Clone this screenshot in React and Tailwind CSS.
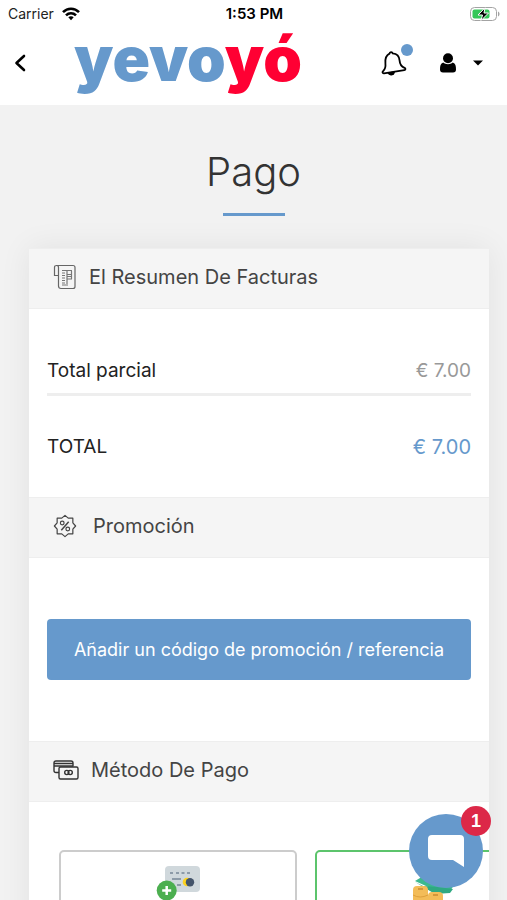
import { useState } from "react";

const methods = [
  { id: "card", label: "Tarjeta" },
  { id: "cash", label: "Efectivo" },
];

function WifiIcon() {
  return (
    <svg viewBox="0 0 18 14" className="w-[18px] h-[14px]" fill="none" stroke="#000" strokeWidth="2.6">
      <path d="M1 5.2C5.5 .6 12.500 .6 17 5.200" />
      <path d="M4 8.400c2.800-2.800 7.200-2.800 10 0" />
      <path d="M6.300 10.200c1.500-1.400 3.900-1.400 5.400 0L9 13.200z" fill="#000" stroke="none" />
    </svg>
  );
}

function BatteryIcon() {
  return (
    <svg viewBox="0 0 32 16" className="w-8 h-4">
      <rect x="1.500" y="1.500" width="26" height="13" rx="4" fill="#fff" stroke="#a3a3a3" />
      <rect x="3.500" y="3.500" width="17" height="9" rx="2" fill="#35c759" />
      <path d="M29 5.500c2 .8 2 4.200 0 5z" fill="#a3a3a3" />
      <path d="M16 1.800 9 9h4.500L12 14.500 19.500 7H15z" fill="#000" stroke="#fff" strokeWidth="1" />
    </svg>
  );
}

function BellIcon() {
  return (
    <svg viewBox="0 0 26 26" className="w-[26px] h-[26px]" fill="none" stroke="#000" strokeWidth="1.8" strokeLinejoin="round">
      <path d="M8.500 3.600c.2-1.900 2.700-2 3.200-.2 4.200.4 6.600 3.200 6.900 7.200.2 3.600 1.400 5.700 5 7.200 1.300.7 1 2.200-.3 2.400L3 23.400c-1.600.2-2-1.500-.8-2.400 2.300-2 2.600-4 2.200-7.800C4 8.600 5.300 5.200 8.500 3.600z" />
      <path d="M7.500 23.200c1 2 5 1.700 5.500-.7z" fill="#000" />
    </svg>
  );
}

function UserIcon() {
  return (
    <svg viewBox="0 0 18 20" className="w-[18px] h-5">
      <circle cx="9" cy="5.200" r="5" fill="#000" />
      <path d="M4.200 9.500C1.500 10.500 1 13 1 16.500 1 18.500 2 19.500 4 19.500h10c2 0 3-1 3-3 0-3.500-.5-6-3.200-7-2.600 2.300-7 2.300-9.600 0z" fill="#000" />
    </svg>
  );
}

function InvoiceIcon() {
  return (
    <svg viewBox="0 0 24 26" className="w-6 h-[26px]" fill="none" stroke="#666" strokeWidth="1.200">
      <path d="M3 1.500h17q2 0 2 2v19q0 2-2 2H8q-2.500 0-2.500-2.500V3.500q0-2-2-2t-2 2v8h4" />
      <path d="M9 6.500h10M9 9h3M9 11.500h3M9 14h3M9 16.500h3M9 19h3M9 21h6" stroke="#777" />
      <path d="M14 7v13M18.500 7v8M14 10.500h5M14 12.500h5M14 15h5" stroke="#777" />
    </svg>
  );
}

function PromoIcon() {
  return (
    <svg viewBox="0 0 26 26" className="w-6 h-6" fill="none" stroke="#444" strokeWidth="1.300" strokeLinejoin="round">
      <path d="M13 1.500 16.500 4.500H21.500v5l3 3.500-3 3.500v5h-5L13 24.500 9.500 21.500h-5v-5L1.500 13l3-3.500v-5h5z" />
      <circle cx="10" cy="9.800" r="2" />
      <circle cx="16" cy="16.200" r="2" />
      <path d="m17 8.500-8 9" strokeWidth="1.600" />
    </svg>
  );
}

function CardsIcon() {
  return (
    <svg viewBox="0 0 26 20" className="w-[26px] h-5" fill="none" stroke="#333" strokeWidth="1.400">
      <path d="M6 12.500H3q-2 0-2-2V3q0-2 2-2h15q2 0 2 2v3.500" />
      <path d="M1 3.500h19M1 6h19" />
      <rect x="6" y="7" width="19" height="12" rx="1.500" />
      <circle cx="13.800" cy="12.500" r="2.100" />
      <circle cx="17.200" cy="12.500" r="2.100" />
    </svg>
  );
}

function CreditCardPicture() {
  return (
    <svg viewBox="0 0 46 46" className="w-[46px] h-[46px]">
      <rect x="10" y="0" width="35" height="26" rx="4" fill="#d0d8dc" />
      <path d="M15 7h3M21 7h3M26.500 7h3M32 7h3" stroke="#8d9ba8" strokeWidth="2" />
      <path d="M17 13h9M22 19h4" stroke="#8d9ba8" strokeWidth="2" />
      <circle cx="32" cy="16" r="4.300" fill="#fdd21f" />
      <circle cx="35" cy="16.300" r="4.200" fill="#44546a" />
      <circle cx="11.700" cy="24.500" r="10" fill="#4caf50" />
      <path d="M11.700 20v9M7.200 24.500h9" stroke="#fff" strokeWidth="2.500" />
    </svg>
  );
}

function CashPicture() {
  return (
    <svg viewBox="0 0 46 46" className="w-[46px] h-[46px]">
      <path d="M4 15 14 9l29 10-5 8-12-2z" fill="#3bb98f" />
      <path d="M4 16 12 20l14 1 16 2-3 4-15 1z" fill="#2fa982" />
      <rect x="2" y="20" width="15" height="30" rx="4" fill="#f3bc58" />
      <rect x="17" y="26" width="15" height="24" rx="4" fill="#f3bc58" />
      <path d="M2 29q7 4 15 0M17 35q7 4 15 0M2 36q7 4 15 0" stroke="#dea03c" fill="none" />
      <path d="M7 23h5M22 29h5" stroke="#c98a30" strokeWidth="1.500" />
    </svg>
  );
}

function SectionHeader({ icon, title, gap = "gap-4" }) {
  return (
    <div className={`flex items-center ${gap} h-[61px] px-6 pb-1 bg-[#f5f5f5] border-y border-[#eeeeee]`}>
      {icon}
      <h2 className="text-xl text-[#444]">{title}</h2>
    </div>
  );
}

export default function App() {
  const [method, setMethod] = useState("cash");

  return (
    <div className="h-screen overflow-hidden bg-[#f2f2f2] font-['Inter',sans-serif] text-[#222]">
      {/* Status bar + header */}
      <header className="bg-white">
        <div className="grid grid-cols-3 items-center h-7 pl-2 pr-1.5 text-sm text-[#222]">
          <div className="flex items-center gap-2">
            <span>Carrier</span>
            <WifiIcon />
          </div>
          <span className="text-center text-[15px] leading-5 font-semibold text-black">1:53 PM</span>
          <div className="flex justify-end">
            <BatteryIcon />
          </div>
        </div>

        <div className="flex items-center h-[77px] pl-3 pr-6 pb-2">
          <button aria-label="Atrás" className="w-4 flex justify-center">
            <svg viewBox="0 0 12 18" className="w-3 h-[18px]" fill="none" stroke="#000" strokeWidth="2.600" strokeLinecap="round" strokeLinejoin="round">
              <path d="M10 2 2.500 9l7.500 7" />
            </svg>
          </button>
          <a href="#" className="block ml-[46px] pb-2 font-black text-[62px] leading-[60px] text-[#6699cc]">
            yevo<span className="text-[#ff0033]">yó</span>
          </a>
          <div className="ml-auto flex items-center">
            <button aria-label="Notificaciones" className="relative">
              <BellIcon />
              <span className="absolute -top-1.5 -right-1.5 w-3 h-3 rounded-full bg-[#6699cc]" />
            </button>
            <button aria-label="Cuenta" className="ml-8 flex items-center gap-4">
              <UserIcon />
              <svg viewBox="0 0 10 6" className="w-[10px] h-[6px]">
                <path d="M0 .5h10L5 5.500z" fill="#000" />
              </svg>
            </button>
          </div>
        </div>
      </header>

      <main>
        <div className="flex flex-col items-center pt-10 pb-8">
          <h1 className="text-[40px] leading-[54px] font-light text-[#333]">Pago</h1>
          <span className="mt-[14px] w-[62px] h-[3px] bg-[#6699cc]" />
        </div>

        <div className="ml-[29px] mr-[18px] bg-white shadow-[0_0_30px_rgba(0,0,0,0.07)] overflow-hidden">
          {/* Summary */}
          <SectionHeader icon={<InvoiceIcon />} title="El Resumen De Facturas" gap="gap-3" />
          <dl className="px-[18px] pt-12 pb-9 text-[19px] leading-7">
            <div className="flex justify-between pb-2 border-b-[3px] border-[#eeeeee]">
              <dt>Total parcial</dt>
              <dd className="text-[#999]">€ 7.00</dd>
            </div>
            <div className="flex justify-between pt-[37px]">
              <dt>TOTAL</dt>
              <dd className="text-xl text-[#6699cc]">€ 7.00</dd>
            </div>
          </dl>

          {/* Promo code */}
          <SectionHeader icon={<PromoIcon />} title="Promoción" />
          <div className="px-[18px] py-[61px]">
            <button className="w-full h-[61px] rounded-[4px] bg-[#6699cc] text-white text-lg">
              Añadir un código de promoción / referencia
            </button>
          </div>

          {/* Payment methods */}
          <SectionHeader icon={<CardsIcon />} title="Método De Pago" gap="gap-3" />
          <div className="flex gap-[18px] pl-[30px] pt-12">
            {methods.map((item) => (
              <button
                key={item.id}
                aria-label={item.label}
                aria-pressed={method === item.id}
                onClick={() => setMethod(item.id)}
                className={`shrink-0 w-[238px] h-[120px] flex justify-center items-start pt-[14px] rounded-[5px] border-2 ${
                  method === item.id ? "border-[#5cc46c]" : "border-[#cccccc]"
                }`}
              >
                {item.id === "card" ? <CreditCardPicture /> : <CashPicture />}
              </button>
            ))}
          </div>
        </div>
      </main>

      {/* Chat button */}
      <button aria-label="Chat" className="fixed right-6 bottom-3 w-[74px] h-[74px] rounded-full bg-[#6699cc] flex items-center justify-center">
        <svg viewBox="0 0 38 34" className="w-[38px] h-[34px]">
          <path d="M5 1h28q4 0 4 4v28l-11-7H5q-4 0-4-4V5q0-4 4-4z" fill="#fff" />
        </svg>
        <span className="absolute -top-2 -right-2 w-[30px] h-[30px] rounded-full bg-[#dc2848] text-white text-lg leading-[30px] font-bold font-['Liberation_Sans',sans-serif]">
          1
        </span>
      </button>
    </div>
  );
}
